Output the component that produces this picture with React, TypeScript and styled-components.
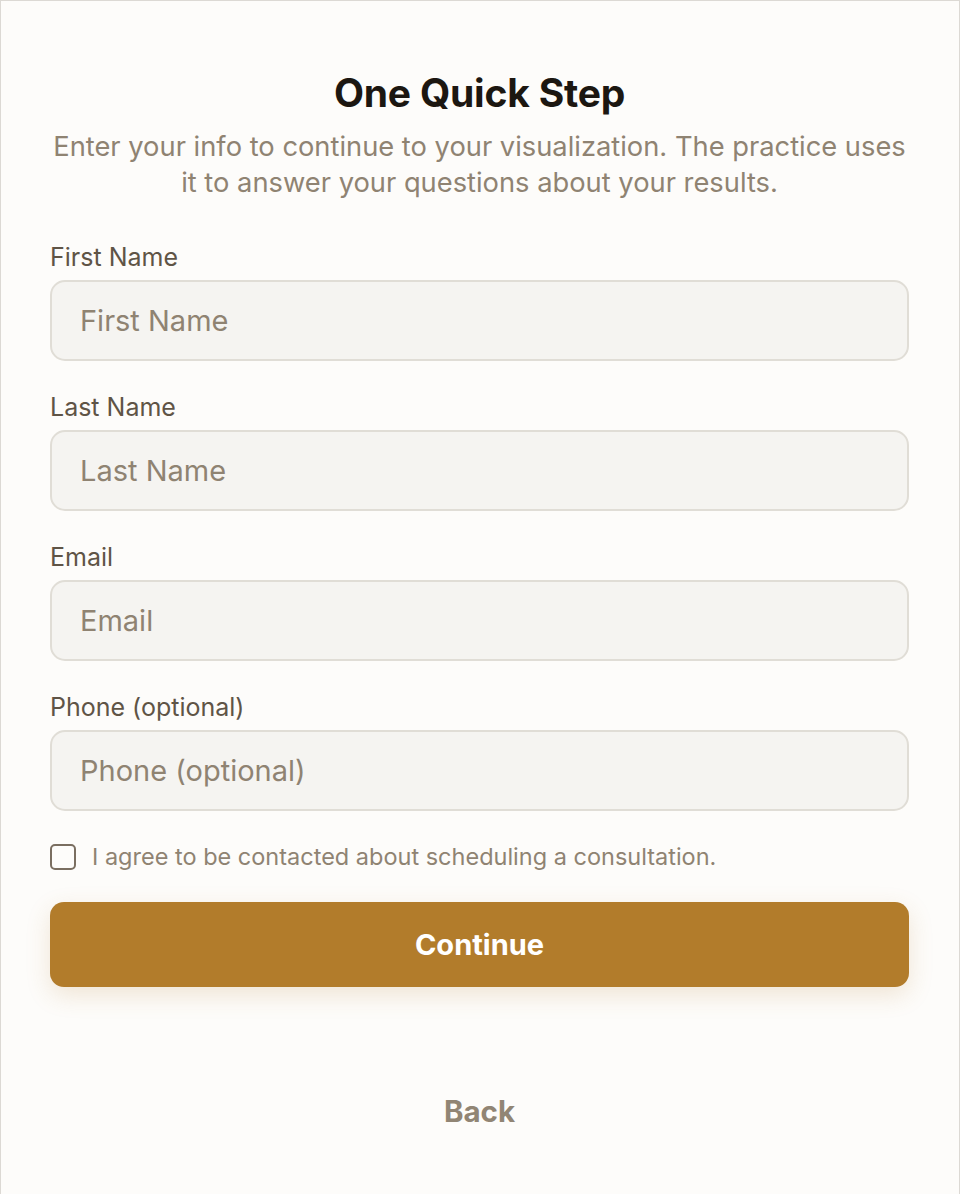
import React, { useState } from "react";
import styled, { createGlobalStyle } from "styled-components";

const GlobalStyle = createGlobalStyle`
  html, body {
    margin: 0;
    padding: 0;
    background: #fdfcfa;
  }
  * {
    box-sizing: border-box;
  }
`;

const fields = [
  { id: "firstName", label: "First Name", type: "text" },
  { id: "lastName", label: "Last Name", type: "text" },
  { id: "email", label: "Email", type: "email" },
  { id: "phone", label: "Phone (optional)", type: "tel" },
];

const App = () => {
  const [agreed, setAgreed] = useState(false);

  return (
    <>
      <GlobalStyle />
      <StyledCard>
        <StyledTitle>One Quick Step</StyledTitle>
        <StyledSubtitle>
          Enter your info to continue to your visualization. The practice uses
          <br />
          it to answer your questions about your results.
        </StyledSubtitle>
        <StyledForm onSubmit={(e) => e.preventDefault()}>
          {fields.map((f) => (
            <StyledField key={f.id}>
              <StyledLabel htmlFor={f.id}>{f.label}</StyledLabel>
              <StyledInput id={f.id} type={f.type} placeholder={f.label} />
            </StyledField>
          ))}
          <StyledConsent>
            <StyledCheckbox
              type="checkbox"
              checked={agreed}
              onChange={(e) => setAgreed(e.target.checked)}
            />
            I agree to be contacted about scheduling a consultation.
          </StyledConsent>
          <StyledContinue type="submit">Continue</StyledContinue>
        </StyledForm>
        <StyledBack type="button">Back</StyledBack>
      </StyledCard>
    </>
  );
};

const StyledCard = styled.div`
  min-height: 1194px;
  border: 1px solid #dcd9d4;
  border-bottom: none;
  background: #fdfcfa;
  padding: 70px 50px 60px 49px;
  display: flex;
  flex-direction: column;
  font-family: Inter, "Liberation Sans", sans-serif;
`;

const StyledTitle = styled.h1`
  margin: 0;
  text-align: center;
  font-size: 39px;
  font-weight: 700;
  line-height: 44px;
  color: #1c1711;
  letter-spacing: -0.2px;
`;

const StyledSubtitle = styled.p`
  margin: 14px 0 0;
  text-align: center;
  font-size: 27.3px;
  line-height: 36px;
  color: #8f8372;
  white-space: nowrap;
`;

const StyledForm = styled.form`
  margin-top: 41px;
  display: flex;
  flex-direction: column;
`;

const StyledField = styled.div`
  display: flex;
  flex-direction: column;
  gap: 8px;
  margin-bottom: 31px;
`;

const StyledLabel = styled.label`
  font-size: 25px;
  line-height: 30px;
  color: #5f5446;
`;

const StyledInput = styled.input`
  height: 81px;
  width: 100%;
  border: 2px solid #e0ddd6;
  border-radius: 15px;
  background: #f5f4f1;
  padding: 0 28px;
  font-family: inherit;
  font-size: 29px;
  color: #3a3128;
  outline: none;
  &::placeholder {
    color: #8f8372;
  }
`;

const StyledConsent = styled.label`
  display: flex;
  align-items: center;
  gap: 16px;
  font-size: 23.5px;
  line-height: 30px;
  color: #8f8372;
`;

const StyledCheckbox = styled.input`
  appearance: none;
  flex: none;
  margin: 0;
  width: 26px;
  height: 26px;
  border: 2px solid #7a6e60;
  border-radius: 5px;
  background: #fdfcfa;
  &:checked {
    background: #b27c2b;
    border-color: #b27c2b;
  }
`;

const StyledContinue = styled.button`
  margin-top: 30px;
  height: 85px;
  width: 100%;
  border: none;
  border-radius: 14px;
  background: #b27c2b;
  color: #fff;
  font-family: inherit;
  font-size: 29px;
  font-weight: 700;
  cursor: pointer;
  box-shadow: 0 8px 24px rgba(178, 124, 43, 0.18);
`;

const StyledBack = styled.button`
  margin: 106px auto 0;
  border: none;
  background: none;
  padding: 0;
  font-family: inherit;
  font-size: 29.5px;
  line-height: 36px;
  font-weight: 700;
  color: #918574;
  cursor: pointer;
`;

export default App;
